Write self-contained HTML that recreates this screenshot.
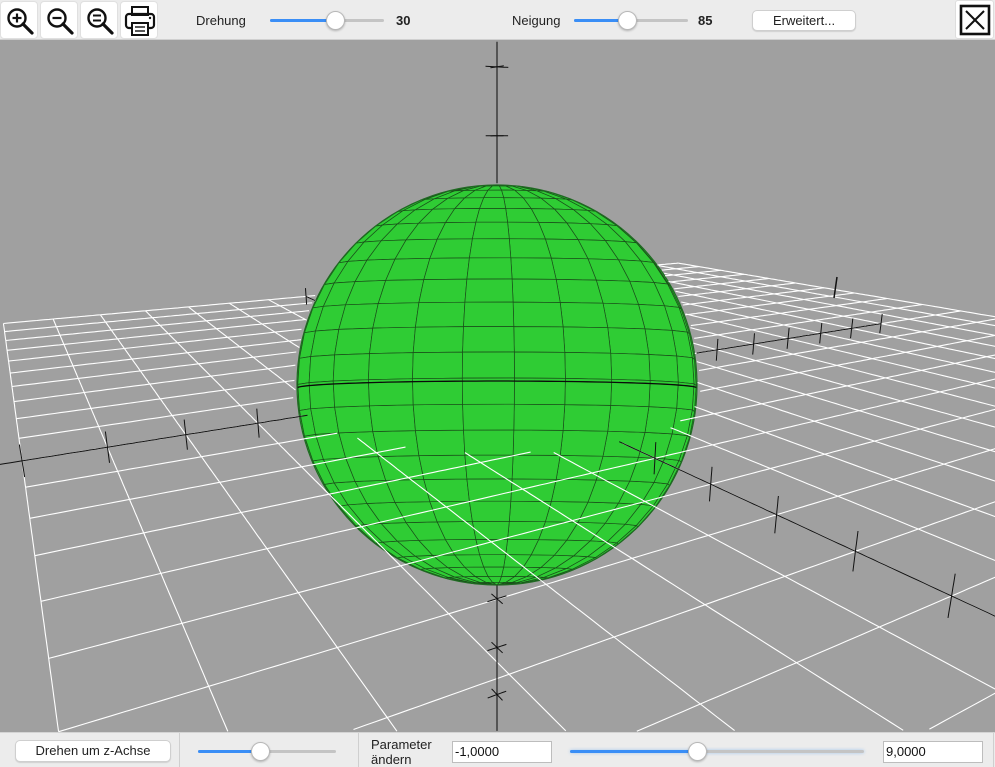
<!DOCTYPE html>
<html><head><meta charset="utf-8">
<style>
*{margin:0;padding:0;box-sizing:border-box}
html,body{width:995px;height:767px;overflow:hidden}
body{background:#a0a0a0;font-family:"Liberation Sans",sans-serif;position:relative}
#scene{position:absolute;left:0;top:0}
.bar{position:absolute;left:0;width:995px;background:#ececec;overflow:hidden}
#top{top:0;height:40px;border-bottom:1px solid #d0d0d0}
#bot{top:732px;height:35px;border-top:1px solid #d4d4d4}
.ib{position:absolute;top:1px;width:38px;height:38px;background:#fff;border-radius:4px;border:1px solid #e0e0e0}
.lbl{position:absolute;font-size:13px;color:#222}
.num{position:absolute;font-size:13px;font-weight:bold;color:#222}
.trk{position:absolute;height:3px;background:#c4c4c4;border-radius:2px}
.fill{position:absolute;left:0;top:0;height:3px;background:#3a8ef6;border-radius:2px}
.thumb{position:absolute;width:19px;height:19px;border-radius:50%;background:#fff;border:1px solid #b8b8b8;box-shadow:0 1px 2px rgba(0,0,0,.25)}
.btn{position:absolute;background:#fff;border:1px solid #cfcfcf;border-radius:5px;font-size:13px;color:#222;text-align:center;box-shadow:0 1px 1px rgba(0,0,0,.12)}
.inp{position:absolute;background:#fff;border:1px solid #bdbdbd;font-size:13px;color:#111;padding-left:2px;line-height:20px}
.sep{position:absolute;top:0;width:1px;height:34px;background:#cfcfcf}
</style></head><body>
<svg id="scene" width="995" height="767" xmlns="http://www.w3.org/2000/svg">
<rect x="0" y="40" width="995" height="692" fill="#a0a0a0"/>
<g id="sph"></g>
<g id="lines" fill="none"></g>
<line x1="837" y1="277" x2="834" y2="298" stroke="#111" stroke-width="1.5"/>
</svg>

<div class="bar" id="top">
  <div class="ib" style="left:0"><svg width="38" height="38"><circle cx="16" cy="16" r="8.5" fill="none" stroke="#111" stroke-width="2.4"/><line x1="22" y1="22" x2="31" y2="31" stroke="#111" stroke-width="3.2" stroke-linecap="round"/><line x1="11.5" y1="16" x2="20.5" y2="16" stroke="#111" stroke-width="2.2"/><line x1="16" y1="11.5" x2="16" y2="20.5" stroke="#111" stroke-width="2.2"/></svg></div>
  <div class="ib" style="left:40px"><svg width="38" height="38"><circle cx="16" cy="16" r="8.5" fill="none" stroke="#111" stroke-width="2.4"/><line x1="22" y1="22" x2="31" y2="31" stroke="#111" stroke-width="3.2" stroke-linecap="round"/><line x1="11.5" y1="16" x2="20.5" y2="16" stroke="#111" stroke-width="2.2"/></svg></div>
  <div class="ib" style="left:80px"><svg width="38" height="38"><circle cx="16" cy="16" r="8.5" fill="none" stroke="#111" stroke-width="2.4"/><line x1="22" y1="22" x2="31" y2="31" stroke="#111" stroke-width="3.2" stroke-linecap="round"/><line x1="12" y1="13.5" x2="20" y2="13.5" stroke="#111" stroke-width="2"/><line x1="12" y1="18.5" x2="20" y2="18.5" stroke="#111" stroke-width="2"/></svg></div>
  <div class="ib" style="left:120px"><svg width="38" height="38"><rect x="11" y="5" width="16" height="8" fill="none" stroke="#111" stroke-width="2"/><rect x="5" y="12" width="28" height="14" rx="3" fill="none" stroke="#111" stroke-width="2.2"/><rect x="11" y="21" width="16" height="12" fill="#fff" stroke="#111" stroke-width="2"/><line x1="14" y1="25" x2="24" y2="25" stroke="#111" stroke-width="1.4"/><line x1="14" y1="29" x2="24" y2="29" stroke="#111" stroke-width="1.4"/><circle cx="29" cy="16" r="1.2" fill="#111"/></svg></div>
  <div class="lbl" style="left:196px;top:13px">Drehung</div>
  <div class="trk" style="left:270px;top:19px;width:114px"><div class="fill" style="width:66px"></div></div>
  <div class="thumb" style="left:326px;top:11px"></div>
  <div class="num" style="left:396px;top:13px">30</div>
  <div class="lbl" style="left:512px;top:13px">Neigung</div>
  <div class="trk" style="left:574px;top:19px;width:114px"><div class="fill" style="width:54px"></div></div>
  <div class="thumb" style="left:618px;top:11px"></div>
  <div class="num" style="left:698px;top:13px">85</div>
  <div class="btn" style="left:752px;top:10px;width:104px;height:21px;line-height:19px">Erweitert...</div>
  <div style="position:absolute;left:955px;top:0;width:39px;height:39px;background:#fff;border:1px solid #ddd;border-radius:3px"><svg width="39" height="39"><rect x="5" y="5" width="28" height="28" fill="none" stroke="#111" stroke-width="2.6"/><line x1="10" y1="10" x2="28" y2="28" stroke="#111" stroke-width="2"/><line x1="28" y1="10" x2="10" y2="28" stroke="#111" stroke-width="2"/></svg></div>
</div>

<div class="bar" id="bot">
  <div class="btn" style="left:15px;top:7px;width:156px;height:22px;line-height:20px">Drehen um z-Achse</div>
  <div class="sep" style="left:179px"></div>
  <div class="trk" style="left:198px;top:17px;width:138px"><div class="fill" style="width:62px"></div></div>
  <div class="thumb" style="left:251px;top:9px"></div>
  <div class="sep" style="left:358px"></div>
  <div class="lbl" style="left:371px;top:4px;line-height:15px;height:30px">Parameter<br>ändern</div>
  <div class="inp" style="left:452px;top:8px;width:100px;height:22px">-1,0000</div>
  <div class="trk" style="left:570px;top:17px;width:294px;box-shadow:0 0 3px rgba(58,142,246,.4)"><div class="fill" style="width:128px"></div></div>
  <div class="thumb" style="left:688px;top:9px"></div>
  <div class="inp" style="left:883px;top:8px;width:100px;height:22px">9,0000</div>
  <div class="sep" style="left:993px"></div>
</div>

<script>
(function(){
var PI=Math.PI,cos=Math.cos,sin=Math.sin,sqrt=Math.sqrt;
var f=849,cx=497,cy=385,D=14.2,e=15.8*PI/180,th=59.6*PI/180,R=3.26;
var ce=cos(e),se=sin(e),F0=cos(th),F1=sin(th);
var f3=[ce*F0,ce*F1,-se],up=[se*F0,se*F1,ce],rt=[sin(th),-cos(th),0];
var C=[-D*f3[0],-D*f3[1],-D*f3[2]];
function dot(a,b){return a[0]*b[0]+a[1]*b[1]+a[2]*b[2];}
function proj(P){var d=[P[0]-C[0],P[1]-C[1],P[2]-C[2]];var dep=dot(d,f3);return [cx+f*dot(d,rt)/dep,cy-f*dot(d,up)/dep,dep];}
function occ(P){var d=[P[0]-C[0],P[1]-C[1],P[2]-C[2]];var a=dot(d,d),b=2*dot(C,d),c=dot(C,C)-R*R;var disc=b*b-4*a*c;if(disc<0)return false;var t=(-b-sqrt(disc))/(2*a);return t>0&&t<0.999;}
var out=[];
function seg(A,B,col,w,n){n=n||240;var runs=[],cur=null;
 for(var i=0;i<=n;i++){var t=i/n;var P=[A[0]+(B[0]-A[0])*t,A[1]+(B[1]-A[1])*t,A[2]+(B[2]-A[2])*t];
  var q=proj(P);var vis=q[2]>0.3&&!occ(P)&&q[1]<732&&q[1]>40;
  if(vis){if(!cur){cur=[];runs.push(cur);}cur.push(q[0].toFixed(1)+","+q[1].toFixed(1));}else cur=null;}
 var d="";runs.forEach(function(r){if(r.length>1)d+="M"+r.join("L");});
 if(d)out.push('<path d="'+d+'" stroke="'+col+'" stroke-width="'+w+'"/>');}
var u0=-7,u1=13,v0=-10,v1=10;
for(var u=u0;u<=u1;u++)seg([u,v0,0],[u,v1,0],"#ffffff",1.1);
for(var v=v0;v<=v1;v++)seg([u0,v,0],[u1,v,0],"#ffffff",1.1);
seg([-7.3,0,0],[10,0,0],"#111",1,300);
seg([0,-10,0],[0,10,0],"#111",1,300);
seg([0,0,-9],[0,0,9],"#222",1.2,400);
var tk=0.22;
for(var i=-7;i<=10;i++){if(i)seg([i,0,-tk],[i,0,tk],"#111",1,10);}
for(var i=-10;i<=10;i++){if(i)seg([0,i,-tk],[0,i,tk],"#111",1,10);}
for(var i=-8;i<=8;i++){if(i){seg([-0.2,0,i],[0.2,0,i],"#111",1,10);seg([0,-0.2,i],[0,0.2,i],"#111",1,10);}}
document.getElementById("lines").innerHTML=out.join("");
var es=-2*PI/180,r=200,scx=497,scy=385,lo=5*PI/180;
var w=[cos(es),0,sin(es)],rr=[0,1,0],uu=[-sin(es),0,cos(es)];
function sp(lat,lon){return [cos(lat)*cos(lon+lo),cos(lat)*sin(lon+lo),sin(lat)];}
function sc(p){return [scx+r*dot(p,rr),scy-r*dot(p,uu)];}
var faces=[];var dl=7.5*PI/180,dn=15*PI/180;
for(var i=0;i<24;i++)for(var j=0;j<24;j++){
 var la=-PI/2+i*dl,ln=j*dn;
 var c=sp(la+dl/2,ln+dn/2);var dp=dot(c,w);if(dp<-0.08)continue;
 var pts=[sp(la,ln),sp(la,ln+dn),sp(la+dl,ln+dn),sp(la+dl,ln)].map(sc);
 faces.push([dp,pts]);}
faces.sort(function(a,b){return a[0]-b[0];});
var s='<circle cx="497" cy="385" r="200" fill="#2ecc33"/>';
faces.forEach(function(fc){s+='<path d="M'+fc[1].map(function(q){return q[0].toFixed(1)+","+q[1].toFixed(1);}).join("L")+'Z" fill="#2fcc34" stroke="#1a4f1a" stroke-width="0.7"/>';});
var eq=[];for(var k=-90;k<=90;k+=3){var a=k*PI/180;var p=[cos(a),sin(a),0];var q=sc(p);eq.push(q[0].toFixed(1)+","+(q[1]+3).toFixed(1));}
s+='<path d="M'+eq.join("L")+'" fill="none" stroke="#0a0a0a" stroke-width="1.3"/>';
s+='<circle cx="497" cy="385" r="200" fill="none" stroke="#1f6a22" stroke-width="1.2"/>';
document.getElementById("sph").innerHTML=s;
})();
</script>
</body></html>
